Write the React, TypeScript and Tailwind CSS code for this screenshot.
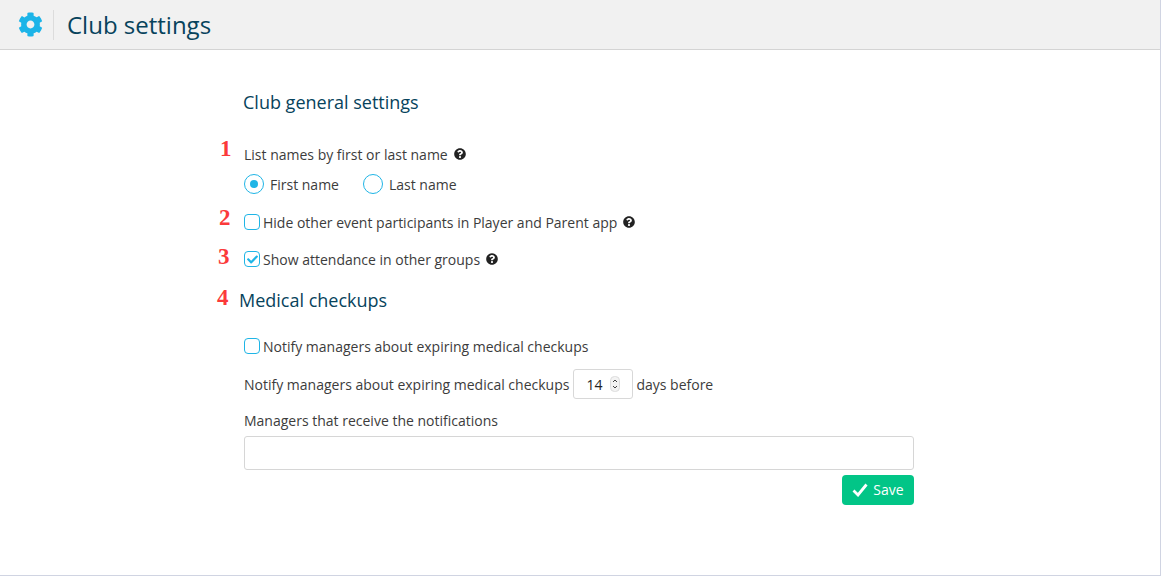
import { FaCheck, FaCog, FaQuestionCircle } from "react-icons/fa";

function Marker({ n, className }: { n: string; className: string }) {
    return (
        <span className={`absolute font-['Liberation_Serif',serif] font-bold text-[23px] leading-none text-[#fb3a3a] ${className}`}>
            {n}
        </span>
    );
}

function Help() {
    return <FaQuestionCircle className="text-[12px] text-[#222] ml-[6px] shrink-0" />;
}

function Check({ checked = false }: { checked?: boolean }) {
    return (
        <span className="w-4 h-4 mr-[3px] rounded-[4px] border border-[#1fb5e6] flex items-center justify-center shrink-0">
            {checked && <FaCheck className="text-[11px] text-[#1fb5e6]" />}
        </span>
    );
}

function Radio({ checked = false }: { checked?: boolean }) {
    return (
        <span className="w-5 h-5 rounded-full border border-[#1fb5e6] flex items-center justify-center shrink-0">
            {checked && <span className="w-2 h-2 rounded-full bg-[#1fb5e6]" />}
        </span>
    );
}

export default function App() {
    return (
        <div className="h-[576px] w-[1161px] bg-white border-r border-b border-[#d0d4e2] font-['Open_Sans',sans-serif] text-[14px] text-[#3c3c3c] overflow-hidden">
            {/* Header */}
            <header className="h-[50px] bg-[#f1f1f1] border-b border-[#d4d4d4] flex items-center pl-[18px]">
                <FaCog className="text-[25px] text-[#1cb4e8]" />
                <div className="w-px h-[30px] bg-[#dcdcdc] ml-[10px] mr-[13px]" />
                <h1 className="text-[24px] text-[#07435c] leading-none">Club settings</h1>
            </header>

            <main className="relative pl-[244px] w-[914px]">
                <h2 className="text-[18px] text-[#07435c] leading-[24px] pt-[40px] -ml-[1px]">Club general settings</h2>

                <Marker n="1" className="left-[220px] top-[87px]" />
                <div className="flex items-center h-[20px] mt-[30px]">
                    List names by first or last name
                    <Help />
                </div>
                <div className="flex items-center h-[20px] mt-[10px]">
                    <Radio checked />
                    <span className="ml-[6px] mr-[24px]">First name</span>
                    <Radio />
                    <span className="ml-[6px]">Last name</span>
                </div>

                <Marker n="2" className="left-[219px] top-[156px]" />
                <div className="flex items-center h-[20px] mt-[18px]">
                    <Check />
                    Hide other event participants in Player and Parent app
                    <Help />
                </div>

                <Marker n="3" className="left-[218px] top-[195px]" />
                <div className="flex items-center h-[20px] mt-[17px]">
                    <Check checked />
                    Show attendance in other groups
                    <Help />
                </div>

                <Marker n="4" className="left-[217px] top-[236px]" />
                <h2 className="text-[18px] text-[#07435c] leading-[24px] mt-[19px] -ml-[5px]">Medical checkups</h2>

                <div className="flex items-center h-[20px] mt-[24px]">
                    <Check />
                    Notify managers about expiring medical checkups
                </div>

                <div className="flex items-center h-[30px] mt-[13px]">
                    Notify managers about expiring medical checkups
                    <div className="w-[60px] h-[30px] ml-[4px] mr-[3px] border border-[#d8d8d8] rounded-[3px] flex items-center justify-end pr-[12px] text-[#222]">
                        <span>14</span>
                        <svg width="10" height="16" viewBox="0 0 10 16" className="ml-[8px] -mt-[1px]">
                            <rect x="0.5" y="0.5" width="9" height="15" rx="4" fill="#f3f3f3" stroke="#dcdcdc" />
                            <path d="M3 6l2-2 2 2M3 10l2 2 2-2" fill="none" stroke="#444" strokeWidth="1" />
                        </svg>
                    </div>
                    days before
                </div>

                <div className="h-[20px] leading-[20px] mt-[12px]">Managers that receive the notifications</div>
                <div className="h-[34px] border border-[#d6d6d6] rounded-[3px] mt-[5px]" />
                <div className="flex justify-end mt-[5px]">
                    <button className="w-[72px] h-[30px] pb-[1px] bg-[#02c587] rounded-[4px] text-white font-medium flex items-center justify-center">
                        <svg width="16" height="14" viewBox="0 0 16 14" className="mr-[5px]">
                            <path d="M1.5 7.5L6 12L14.5 1.5" fill="none" stroke="#fff" strokeWidth="2.8" />
                        </svg>
                        Save
                    </button>
                </div>
            </main>
        </div>
    );
}
